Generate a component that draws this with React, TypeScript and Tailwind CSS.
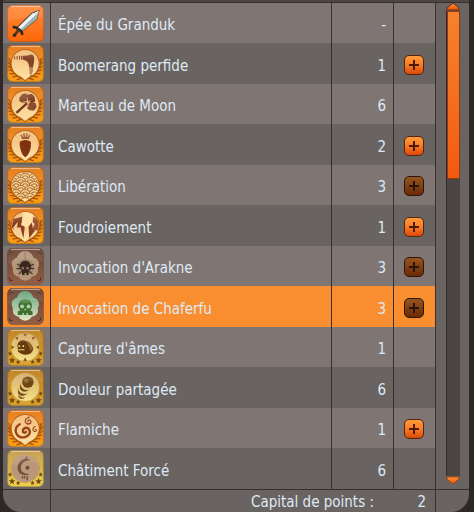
import type { ReactNode } from 'react';
import clsx from 'clsx';

type Frame = 'plain' | 'laurel' | 'totem' | 'stars' | 'pale';

interface Spell {
  name: string;
  level: number | null;
  frame: Frame;
  art: ReactNode;
  upgrade?: 'ready' | 'locked';
  selected?: boolean;
}

// Background gradient ids for each kind of frame
const frameFill: Record<Frame, string> = {
  plain: 'url(#fill-plain)',
  laurel: 'url(#fill-laurel)',
  totem: 'url(#fill-totem)',
  stars: 'url(#fill-stars)',
  pale: 'url(#fill-pale)',
};

const Gradient = ({ id, from, to }: { id: string; from: string; to: string }) => (
  <linearGradient id={id} x1="0" y1="0" x2="0" y2="1">
    <stop offset="0" stopColor={from} />
    <stop offset="1" stopColor={to} />
  </linearGradient>
);

const IconDefs = () => (
  <svg className="absolute size-0" aria-hidden="true">
    <defs>
      <Gradient id="fill-plain" from="#ff8a3c" to="#ff6708" />
      <Gradient id="fill-laurel" from="#e4740f" to="#fba016" />
      <Gradient id="fill-totem" from="#68402f" to="#936047" />
      <Gradient id="fill-stars" from="#b87b18" to="#dfa62f" />
      <Gradient id="fill-pale" from="#c29747" to="#efd54f" />
      <Gradient id="medal" from="#f2bb78" to="#ffe3a6" />
      <Gradient id="medal-gold" from="#d5a968" to="#f5e389" />
      <linearGradient id="skull-glow" gradientUnits="userSpaceOnUse" x1="0" y1="10" x2="0" y2="98">
        <stop offset="0" stopColor="#62a179" />
        <stop offset="1" stopColor="#e6e8cb" />
      </linearGradient>
      <Gradient id="arrow" from="#ff9738" to="#e8500c" />
      <clipPath id="medal-clip">
        <circle cx="54" cy="55" r="40" />
      </clipPath>
    </defs>
  </svg>
);

const star = 'M0 -10 L3 -3 L10 -3 L4 2 L6 9 L0 5 L-6 9 L-4 2 L-10 -3 L-3 -3 Z';

// Leaves running down one side of the medallion
const Branch = () => (
  <g stroke="#a8500c" strokeWidth="4" strokeLinecap="round" fill="none">
    <path d="M9 48 L5 40 M9 58 L3 51 M11 68 L4 63 M15 77 L6 74 M22 86 L10 85 M31 93 L18 95 M42 99 L30 103" />
    <path d="M9 44 Q8 84 46 101" strokeWidth="3" />
  </g>
);

const FrameArt = ({ frame }: { frame: Frame }) => {
  if (frame === 'laurel') {
    return (
      <>
        <Branch />
        <g transform="translate(108 0) scale(-1 1)">
          <Branch />
        </g>
        <path
          d="M40 95 A42 42 0 1 1 68 95 L54 106 Z"
          fill="url(#medal)"
          stroke="#b45a12"
          strokeWidth="3"
        />
      </>
    );
  }
  if (frame === 'totem') {
    return (
      <g fill="none" stroke="#4b2c22" strokeWidth="3">
        <path d="M6 20 Q10 8 18 16 M102 20 Q98 8 90 16" />
        <path d="M7 88 Q9 102 16 95 M101 88 Q99 102 92 95" />
      </g>
    );
  }
  if (frame === 'stars' || frame === 'pale') {
    return (
      <>
        <circle cx="54" cy="54" r="43" fill="url(#medal-gold)" stroke="#b98427" strokeWidth="2" />
        <g fill="#744810">
          <path d={star} transform="translate(15 93)" />
          <path d={star} transform="translate(94 93)" />
          <path d={star} transform="translate(33 98) scale(.7)" />
          <path d={star} transform="translate(76 98) scale(.7)" />
          <path d={star} transform="translate(9 73) scale(.7)" />
          <path d={star} transform="translate(100 73) scale(.7)" />
        </g>
      </>
    );
  }
  return null;
};

const SpellIcon = ({ frame, children }: { frame: Frame; children: ReactNode }) => (
  <svg viewBox="0 0 110 110" className="block size-[37px]" aria-hidden="true">
    <rect x="1" y="1" width="108" height="108" rx="15" fill={frameFill[frame]} />
    <FrameArt frame={frame} />
    {children}
    <path d="M12 5 Q16 4 20 4 H90 Q94 4 98 5" fill="none" stroke="#fff" strokeOpacity=".5" strokeWidth="4" />
    <path d="M3 17 Q3 3 17 3 H93 Q107 3 107 17 V40 Q60 30 3 50 Z" fill="#fff" fillOpacity=".08" />
    <rect x="2" y="2" width="106" height="106" rx="15" fill="none" stroke="#5e3012" strokeOpacity=".35" strokeWidth="2" />
  </svg>
);

const Sword = () => (
  <>
    <path d="M95 17 L74 24 L31 66 L44 79 L88 42 Z" fill="#e9f1ef" stroke="#3f352a" strokeWidth="3" />
    <path d="M95 17 L88 42 L44 79 L38 72 Z" fill="#9fb3b2" />
    <path d="M93 19 L39 71" stroke="#fff" strokeWidth="3" />
    <path d="M20 66 Q28 65 34 73 Q44 76 45 86" fill="none" stroke="#2f2821" strokeWidth="8" strokeLinecap="round" />
    <path d="M33 76 L23 89" stroke="#5a3a1c" strokeWidth="9" strokeLinecap="round" />
    <circle cx="22" cy="90" r="5" fill="#332a22" />
  </>
);

const Boomerang = () => (
  <>
    <path d="M46 32 Q60 33 70 28 Q81 27 81 40 Q81 52 77 68 L66 67 Q66 46 46 43 Z" fill="#86452a" />
    <path d="M23 34 V43 M30 33 V43 M37 32 V43 M43 32 V43" stroke="#7d3b20" strokeWidth="3" />
    <path d="M66 71 H77 M67 77 H77 M67 83 H75 M71 88 V92" stroke="#7d3b20" strokeWidth="3" />
  </>
);

const Hammer = () => (
  <>
    <path d="M28 80 L60 51" stroke="#77391f" strokeWidth="7" />
    <path d="M36 36 L46 24 L57 22 L65 33 L62 48 L50 51 L38 46 Z" fill="#8a4b30" />
    <path d="M62 54 L74 46 L86 52 L88 64 L80 73 L67 72 L60 66 Z" fill="#8a4b30" />
    <path d="M60 26 L74 24 L82 32 L84 46 L72 50 L60 46 Z" fill="#7d4026" />
    <path d="M48 48 L70 44 M60 34 L63 62" stroke="#e9b67d" strokeWidth="3" />
  </>
);

const Carrot = () => (
  <>
    <path d="M38 47 Q54 36 71 47 Q73 72 61 87 L54 93 L47 86 Q36 66 38 47 Z" fill="#7f3112" />
    <path d="M47 37 L42 26 M52 37 L50 22 M57 37 L59 22 M62 37 L68 27" stroke="#a55f3b" strokeWidth="5" />
    <path d="M44 36 H65" stroke="#924f2c" strokeWidth="5" />
    <path d="M41 60 H50 M60 68 H68 M45 77 H52" stroke="#94481f" strokeWidth="2" />
  </>
);

const Waves = () => (
  <g clipPath="url(#medal-clip)" fill="#f8d597" stroke="#b27438" strokeWidth="3">
    {[20, 32, 44, 56, 68, 80, 92, 104].map((y, row) =>
      [-1, 0, 1, 2, 3].map((col) => {
        const x = 14 + col * 27 + (row % 2) * 13;
        return (
          <g key={`${x}-${y}`}>
            <ellipse cx={x} cy={y} rx="15" ry="13" />
            <ellipse cx={x} cy={y} rx="8" ry="6" />
          </g>
        );
      }),
    )}
  </g>
);

const Lightning = () => (
  <g clipPath="url(#medal-clip)">
    <path d="M18 36 L48 28 L42 54 L53 58 L49 92 L38 64 L28 72 L14 62 Z" fill="#8a3f20" />
    <path d="M78 30 L98 34 L100 68 L80 70 L66 92 L66 60 L76 52 Z" fill="#9a5434" />
    <path d="M18 62 L32 44 L30 62 L40 60 L46 84 L30 84 Z" fill="#f6cd92" />
    <path d="M48 12 L80 14 L74 44 L82 50 L66 92 L62 60 L52 58 L43 52 Z" fill="#ffdf9f" />
    <path d="M64 58 L74 46 L78 70 L84 70 L66 92 Z" fill="#8a3f20" />
  </g>
);

// Four overlapping lobes behind the totem creature
const Lobes = ({ fill }: { fill: string }) => (
  <g fill={fill}>
    <circle cx="54" cy="34" r="25" />
    <circle cx="34" cy="48" r="20" />
    <circle cx="75" cy="48" r="20" />
    <circle cx="36" cy="66" r="19" />
    <circle cx="73" cy="66" r="19" />
    <circle cx="54" cy="74" r="23" />
  </g>
);

const Spider = () => (
  <>
    <Lobes fill="#b4967a" />
    <path d="M54 10 V40" stroke="#7c6250" strokeWidth="2" />
    <circle cx="55" cy="57" r="25" fill="#8c7360" fillOpacity=".5" />
    <path d="M30 48 L44 54 M28 62 L44 60 M34 78 L46 68 M80 48 L66 54 M81 62 L66 60 M76 78 L64 68" stroke="#3b261e" strokeWidth="3" />
    <path d="M37 54 Q42 38 54 38 Q68 38 72 54 Q72 64 65 68 L64 80 H58 V74 H52 V80 H45 L44 68 Q37 64 37 54 Z" fill="#3b261e" />
    <circle cx="47" cy="60" r="4" fill="#8d705c" />
    <circle cx="61" cy="60" r="4" fill="#8d705c" />
  </>
);

const Skull = () => (
  <>
    <Lobes fill="url(#skull-glow)" />
    <path d="M34 50 Q38 34 54 34 Q71 34 74 50 Q75 62 69 66 L76 70 V80 H62 V74 H58 V80 H50 V74 H46 V80 H32 V70 L40 66 Q33 60 34 50 Z" fill="#3f702f" />
    <path d="M38 45 Q43 35 54 35 Q66 35 70 45 Z" fill="#5c8b4b" />
    <circle cx="45" cy="55" r="6" fill="#a9cda4" />
    <circle cx="64" cy="55" r="6" fill="#a9cda4" />
    <path d="M54 60 L51 66 H58 Z" fill="#b7d2a2" />
  </>
);

const Ghost = () => (
  <>
    <g fill="#8a5a18">
      <path d="M48 14 H60 L54 22 Z M24 24 L34 24 L31 34 Z M84 24 L74 24 L77 34 Z M13 48 V60 L22 54 Z M95 48 V60 L86 54 Z M48 95 H60 L54 85 Z" />
    </g>
    <path d="M31 48 Q34 32 52 34 Q68 38 78 57 Q76 74 60 76 Q42 78 33 66 Z" fill="#663b0d" />
    <path d="M54 34 Q72 38 78 57 L70 66 Q64 48 54 34 Z" fill="#8f6024" />
    <path d="M34 51 H39 M46 51 H51" stroke="#efd286" strokeWidth="5" />
    <path d="M34 62 H52" stroke="#efd286" strokeWidth="3" />
  </>
);

const Echo = () => (
  <>
    <circle cx="62" cy="39" r="17" fill="#704713" />
    <path d="M39 42 Q43 65 66 62 Q48 75 38 59 Z" fill="#77501a" />
    <path d="M32 58 Q38 78 62 73 Q43 87 33 73 Z" fill="#77501a" />
    <path d="M34 75 Q41 87 55 84 Q43 95 34 84 Z" fill="#8d682b" />
    <circle cx="57" cy="35" r="7" fill="#8e6428" />
  </>
);

const Swirls = () => (
  <g fill="none" stroke="#98431c" strokeLinecap="round">
    <path d="M38 42 Q20 54 28 70 Q36 84 52 81 Q68 77 68 64 Q66 52 54 53 Q45 57 48 66 Q53 70 57 65" strokeWidth="7" />
    <path d="M66 21 Q54 25 54 35 Q59 45 69 40 Q74 34 68 30 Q62 29 62 35" strokeWidth="4" />
    <path d="M84 49 Q76 52 77 60 Q82 67 87 62 Q88 57 83 57" strokeWidth="3" />
  </g>
);

const Crescent = () => (
  <>
    <circle cx="54" cy="55" r="41" fill="#b9977a" />
    <path d="M73 31 Q54 20 39 34 Q24 54 38 70 Q51 80 68 71 Q50 72 42 60 Q37 42 53 34 Q64 29 73 31 Z" fill="#765039" />
    <path d="M52 32 L60 20" stroke="#765039" strokeWidth="4" />
    <circle cx="61" cy="53" r="6" fill="#704a35" />
    <path d="M46 77 V85 M60 77 V90 M52 77 V85" stroke="#704a35" strokeWidth="4" />
  </>
);

const spells: Spell[] = [
  { name: 'Épée du Granduk', level: null, frame: 'plain', art: <Sword /> },
  { name: 'Boomerang perfide', level: 1, frame: 'laurel', art: <Boomerang />, upgrade: 'ready' },
  { name: 'Marteau de Moon', level: 6, frame: 'laurel', art: <Hammer /> },
  { name: 'Cawotte', level: 2, frame: 'laurel', art: <Carrot />, upgrade: 'ready' },
  { name: 'Libération', level: 3, frame: 'laurel', art: <Waves />, upgrade: 'locked' },
  { name: 'Foudroiement', level: 1, frame: 'laurel', art: <Lightning />, upgrade: 'ready' },
  { name: "Invocation d'Arakne", level: 3, frame: 'totem', art: <Spider />, upgrade: 'locked' },
  { name: 'Invocation de Chaferfu', level: 3, frame: 'totem', art: <Skull />, upgrade: 'locked', selected: true },
  { name: "Capture d'âmes", level: 1, frame: 'stars', art: <Ghost /> },
  { name: 'Douleur partagée', level: 6, frame: 'stars', art: <Echo /> },
  { name: 'Flamiche', level: 1, frame: 'laurel', art: <Swirls />, upgrade: 'ready' },
  { name: 'Châtiment Forcé', level: 6, frame: 'pale', art: <Crescent /> },
];

const UpgradeButton = ({ name, locked }: { name: string; locked: boolean }) => (
  <button
    type="button"
    disabled={locked}
    aria-label={`Améliorer ${name}`}
    className={clsx(
      'mx-auto flex size-5 items-center justify-center rounded-[5px] border bg-linear-to-b',
      locked
        ? 'border-[#2b1508] from-[#96551f] to-[#6b2a04] text-[#2b1508]'
        : 'border-[#54250d] from-[#ff9a3a] via-[#fb7a22] to-[#d9480a] text-[#4a1d08]',
    )}
  >
    <svg viewBox="0 0 10 10" className="size-[10px]" aria-hidden="true">
      <path d="M5 0 V10 M0 5 H10" stroke="currentColor" strokeWidth="2" />
    </svg>
  </button>
);

const SpellRow = ({ spell }: { spell: Spell }) => (
  <tr
    className={clsx(
      'odd:h-10 even:h-[41px]',
      spell.selected ? 'bg-[#f98e30]' : 'odd:bg-[#7f7673] even:bg-[#696461]',
    )}
  >
    <td className="pl-1">
      <SpellIcon frame={spell.frame}>{spell.art}</SpellIcon>
    </td>
    <td className="border-l border-[#37302d] pt-1 pl-[7px]">{spell.name}</td>
    <td className="border-l border-[#37302d] pt-1 pr-[7px] text-right">{spell.level ?? '-'}</td>
    <td className="border-l border-[#37302d] pt-[2px] pr-[2px]">
      {spell.upgrade && <UpgradeButton name={spell.name} locked={spell.upgrade === 'locked'} />}
    </td>
  </tr>
);

const Scrollbar = () => (
  <div className="flex w-[34px] shrink-0 flex-col border-l border-[#37302d]">
    <div className="flex flex-1 flex-col items-center pr-[6px] pl-[7px]">
      <button type="button" aria-label="Monter" className="-mt-px">
        <svg viewBox="0 0 14 9" className="block h-[9px] w-[14px]">
          <path d="M7 1 L13 6 V8 H1 V6 Z" fill="url(#arrow)" stroke="#6b2b0d" />
        </svg>
      </button>
      <div className="flex w-[14px] flex-1 flex-col border-l border-[#2f2a28] bg-[#4a4542]">
        <div className="h-[35%] min-h-[168px] border border-[#8c3a10] bg-linear-to-b from-[#f5822f] to-[#f25a0e]" />
      </div>
      <button type="button" aria-label="Descendre" className="mb-1">
        <svg viewBox="0 0 14 9" className="block h-[9px] w-[14px]">
          <path d="M1 1 H13 V3 L7 8 L1 3 Z" fill="url(#arrow)" stroke="#a8430f" />
        </svg>
      </button>
    </div>
    <div className="h-[23px] border-t border-[#37302d]" />
  </div>
);

export default function App() {
  return (
    <main className="bg-[#302826] pr-[5px] pl-[3px] font-['DejaVu_Sans_Condensed','DejaVu_Sans',sans-serif] text-[15px] leading-5 text-[#dfe9f5]">
      <IconDefs />
      <div className="h-[2px] bg-[#4d4744]" />
      <div className="flex overflow-hidden rounded-b-[18px] border-t border-[#37302d] bg-[#696461]">
        <table className="flex-1 table-fixed border-separate border-spacing-0">
          <colgroup>
            <col className="w-[47px]" />
            <col />
            <col className="w-[62px]" />
            <col className="w-[42px]" />
          </colgroup>
          <tbody>
            {spells.map((spell) => (
              <SpellRow key={spell.name} spell={spell} />
            ))}
          </tbody>
          <tfoot>
            <tr className="h-[23px]">
              <td className="border-t border-[#37302d]" />
              <td colSpan={3} className="border-t border-l border-[#37302d] pt-px pr-[9px]">
                <div className="flex justify-end">
                  <span>Capital de points :</span>
                  <span className="w-[52px] text-right">2</span>
                </div>
              </td>
            </tr>
          </tfoot>
        </table>
        <Scrollbar />
      </div>
    </main>
  );
}
